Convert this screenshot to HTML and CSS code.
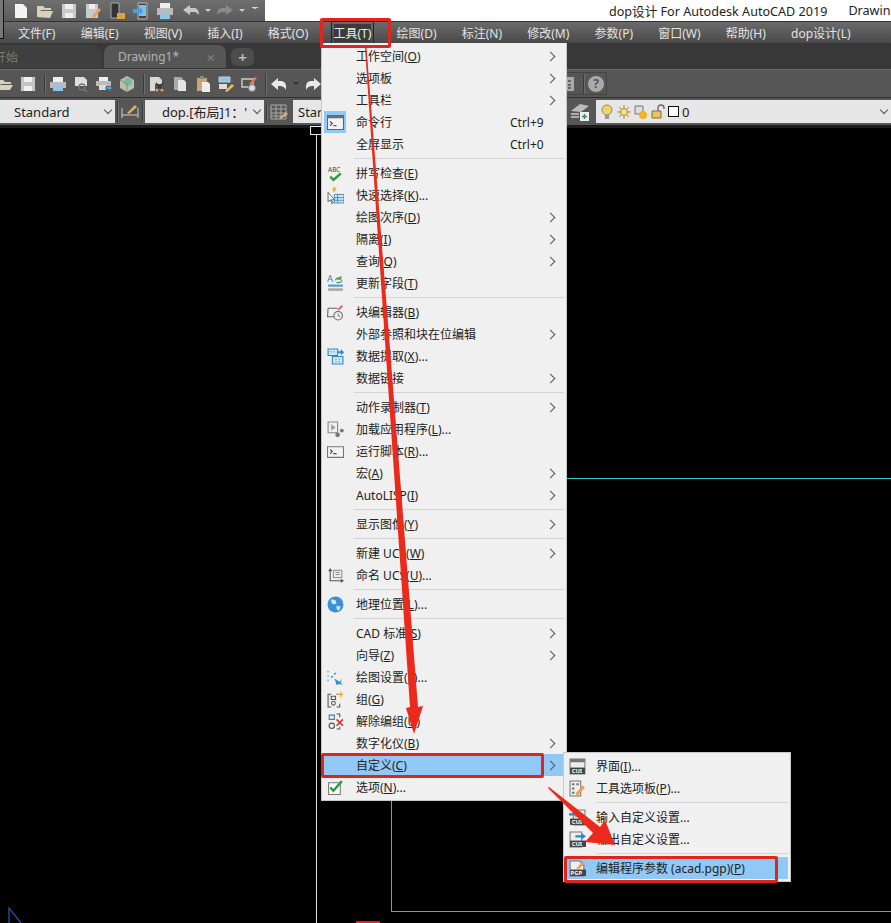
FILE: index.html
```html
<!DOCTYPE html>
<html lang="zh-CN">
<head>
    <meta charset="UTF-8" />
    <title>dop设计 For Autodesk AutoCAD 2019</title>
    <link rel="stylesheet" href="styles.css">
</head>
<body>
    <i class="corner"></i>

    <!-- Title bar -->
    <div class="titlebar">
        <div class="qat">
            <svg class="qi" viewBox="0 0 18 18"><path d="M3 2h8l4 4v10H3z" fill="#f4f4f4"/></svg>
            <svg class="qi" viewBox="0 0 18 18"><path d="M1 15V4h6l2 2h6v2H5l-4 7 3-6h13l-3 7z" fill="#d8d2bd"/></svg>
            <svg class="qi" viewBox="0 0 18 18"><path d="M2 2h14v14H2z" fill="#c9c9c9"/><path d="M5 2h8v5H5zM5 11h8v5H5z" fill="#efefef"/></svg>
            <svg class="qi" viewBox="0 0 18 18"><path d="M2 2h12v14H2z" fill="#c9c9c9"/><path d="M5 2h6v5H5z" fill="#efefef"/><path d="M8 14l7-8 2 2-7 8z" fill="#e8a15a"/></svg>
            <svg class="qi" viewBox="0 0 18 18"><path d="M3 1h8v15H3z" fill="#333" stroke="#aaa"/><path d="M9 11h8v6H9z" fill="#d9a441"/></svg>
            <svg class="qi" viewBox="0 0 18 18"><path d="M6 1h9v16H6z" fill="#444" stroke="#bbb"/><path d="M7 3h7v11H7z" fill="#7cc0ee"/><path d="M1 7h7V5l3 4-3 4v-2H1z" fill="#4a9fdc"/></svg>
            <svg class="qi" viewBox="0 0 18 18"><path d="M4 1h10v5H4z" fill="#eee"/><path d="M1 6h16v7H1z" fill="#bbb"/><path d="M4 11h10v6H4z" fill="#8fc4ea"/></svg>
            <svg class="qi undo" viewBox="0 0 18 18"><path d="M1 8l7-5v3h5q4 1 4 7-2-3-5-3H8v3z" fill="#c8c8c8"/></svg>
            <span class="drop"></span>
            <svg class="qi redo" viewBox="0 0 18 18"><path d="M17 8l-7-5v3H5q-4 1-4 7 2-3 5-3h4v3z" fill="#8a8a8a"/></svg>
            <span class="drop"></span>
            <span class="qat-more"></span>
        </div>
        <div class="app-title">dop设计 For Autodesk AutoCAD 2019</div>
        <div class="doc-title">Drawing</div>
    </div>

    <!-- Menu bar -->
    <div class="menubar">
        <span>文件(F)</span>
        <span>编辑(E)</span>
        <span>视图(V)</span>
        <span>插入(I)</span>
        <span>格式(O)</span>
        <span class="open">工具(T)</span>
        <span>绘图(D)</span>
        <span>标注(N)</span>
        <span>修改(M)</span>
        <span>参数(P)</span>
        <span>窗口(W)</span>
        <span>帮助(H)</span>
        <span>dop设计(L)</span>
    </div>

    <!-- File tabs -->
    <div class="tabbar">
        <div class="tab start">开始</div>
        <div class="tab active">Drawing1*<span class="close">×</span></div>
        <div class="tab plus">+</div>
    </div>

    <!-- Standard toolbar -->
    <div class="toolbar">
        <svg class="ti first" viewBox="0 0 16 16"><path d="M0 14V4h6l2 2h6v2H4l-4 6 3-5h13l-3 5z" fill="#d8d2bd"/></svg>
        <svg class="ti" viewBox="0 0 16 16"><path d="M1 1h14v14H1z" fill="#c4c4c4"/><path d="M4 1h8v5H4zM4 10h8v5H4z" fill="#f0f0f0"/></svg>
        <i class="sep"></i>
        <svg class="ti" viewBox="0 0 16 16"><path d="M3 1h10v5H3z" fill="#eee"/><path d="M0 6h16v6H0z" fill="#bbb"/><path d="M3 10h10v5H3z" fill="#8fc4ea"/></svg>
        <svg class="ti" viewBox="0 0 16 16"><path d="M2 1h9l3 3v6H2z" fill="#ddd"/><circle cx="9" cy="11" r="3" fill="none" stroke="#777" stroke-width="1.3"/><path d="M11 13l3 3" stroke="#777" stroke-width="1.5"/></svg>
        <svg class="ti" viewBox="0 0 16 16"><path d="M3 1h9v4H3z" fill="#eee"/><path d="M0 5h15v5H0z" fill="#bbb"/><path d="M3 9h7v5H3z" fill="#ddd"/><path d="M9 11h4V9l3 3-3 3v-2H9z" fill="#4a9fdc"/></svg>
        <svg class="ti" viewBox="0 0 16 16"><path d="M8 0l7 4v8l-7 4-7-4V4z" fill="#b9c2a8"/><circle cx="9" cy="6" r="4" fill="#7fb8a0"/><path d="M1 4l7 4v8" fill="none" stroke="#888"/></svg>
        <i class="sep"></i>
        <svg class="ti" viewBox="0 0 16 16"><path d="M1 1h9l3 3v4H1z" fill="#d8d8d8"/><path d="M1 8h5v7H1z" fill="#d8d8d8"/><path d="M7 7l7 7M14 7l-7 7" stroke="#333" stroke-width="1.3"/><circle cx="8" cy="14" r="1.6" fill="#e0a050"/><circle cx="13" cy="14" r="1.6" fill="#e0a050"/></svg>
        <svg class="ti" viewBox="0 0 16 16"><path d="M2 1h7l2 2v11H2z" fill="#aaa"/><path d="M6 4h6l2 2v9H6z" fill="#e6e6e6"/></svg>
        <svg class="ti" viewBox="0 0 16 16"><path d="M2 2h10v13H2z" fill="#c9a679"/><path d="M5 0h4v3H5z" fill="#888"/><path d="M7 6h6l2 2v8H7z" fill="#eee"/></svg>
        <svg class="ti" viewBox="0 0 16 16"><path d="M1 1h11v5H1z" fill="#8fc4ea" stroke="#ccc"/><path d="M1 8h8v5H1z" fill="#ddd"/><path d="M7 15l7-7 2 2-7 6z" fill="#e8c06a"/></svg>
        <svg class="ti" viewBox="0 0 16 16"><path d="M1 3h11v8H1z" fill="none" stroke="#ccc" stroke-width="1.4"/><circle cx="11" cy="12" r="3.5" fill="#ddd" stroke="#777"/><path d="M8 8l6-7 2 1-6 7z" fill="#e07a50"/></svg>
        <i class="sep"></i>
        <svg class="ti" viewBox="0 0 16 16"><path d="M0 8l7-6v3h4q5 1 4 9-2-4-6-4H7v4z" fill="#e8e8e8"/></svg>
        <span class="drop dark"></span>
        <svg class="ti" viewBox="0 0 16 16"><path d="M16 8L9 2v3H5Q0 6 1 14q2-4 6-4h2v4z" fill="#e8e8e8"/></svg>
        <div class="toolbar-right">
            <svg class="ti" viewBox="0 0 16 16"><path d="M0 1h14v14H0z" fill="#aaa"/><path d="M3 4h3v2H3zM8 4h3v2H8zM3 8h3v2H3zM8 8h3v2H8zM3 11h3v2H3zM8 11h3v2H8z" fill="#666"/></svg>
            <i class="sep"></i>
            <span class="help">?</span>
        </div>
    </div>

    <!-- Style toolbar -->
    <div class="stylebar">
        <div class="combo c-standard">Standard<span class="caret"></span></div>
        <i class="sep"></i>
        <svg class="si" viewBox="0 0 20 20"><path d="M2 6v10M18 6v10M2 13h16" stroke="#ccc" fill="none"/><path d="M7 11l8-8 2 2-8 7z" fill="#d8b26a"/></svg>
        <i class="sep"></i>
        <div class="combo c-dim">dop.[布局]1：'<span class="caret"></span></div>
        <i class="sep"></i>
        <svg class="si" viewBox="0 0 20 20"><path d="M2 3h15v14H2zM2 7h15M2 11h15M2 14h15M7 3v14M12 3v14" fill="none" stroke="#aaa"/><path d="M10 16l7-6 2 2-7 5z" fill="#d8b26a"/></svg>
        <div class="combo c-table">Star</div>
        <div class="layer-group">
            <svg class="si" viewBox="0 0 20 20"><path d="M1 9l9-7 9 2-8 6z" fill="#bbb"/><path d="M1 12h8M1 15h8" stroke="#ccc" stroke-width="1.5"/><path d="M10 10h9v9h-9z" fill="#eee"/><path d="M14.500 12v5M12 14.500h5" stroke="#3a8a55" stroke-width="1.500"/></svg>
            <div class="combo c-layer">
                <svg class="li" viewBox="0 0 14 16"><circle cx="7" cy="6" r="5" fill="#f4d65c" stroke="#888"/><path d="M5 11h4v4H5z" fill="#999"/></svg>
                <svg class="li" viewBox="0 0 14 16"><circle cx="7" cy="8" r="3.500" fill="#f4e38a" stroke="#a58a3a"/><path d="M7 1v3M7 12v3M0 8h3M11 8h3M2 3l2 2M10 11l2 2M12 3l-2 2M2 13l2-2" stroke="#a58a3a"/></svg>
                <svg class="li" viewBox="0 0 14 16"><path d="M1 2h8v8H1z" fill="#ddd" stroke="#777"/><circle cx="9" cy="11" r="4" fill="#f0b52a"/></svg>
                <svg class="li" viewBox="0 0 14 16"><path d="M1 7h9v7H1z" fill="#e8c65a" stroke="#8a7030"/><path d="M7 7V4q0-3 3-3t3 3v1" fill="none" stroke="#666" stroke-width="1.300"/></svg>
                <span class="swatch"></span>
                <span class="layer-name">0</span>
                <span class="caret"></span>
            </div>
        </div>
    </div>

    <!-- Drawing area -->
    <div class="canvas">
        <i class="grip"></i>
        <i class="line white-v"></i>
        <i class="line cy-top"></i>
        <i class="line cy-left"></i>
        <i class="line cy-bottom"></i>
        <i class="red-mark"></i>
        <svg class="ucs" viewBox="0 0 14 16"><path d="M1 16V1l12 15" fill="none" stroke="#2a4fb0" stroke-width="1.300"/></svg>
    </div>

    <!-- Tools menu -->
    <div class="menu tools-menu">
        <div class="row sub"><span class="ico"></span><span class="label">工作空间(<u>O</u>)</span></div>
        <div class="row sub"><span class="ico"></span><span class="label">选项板</span></div>
        <div class="row sub"><span class="ico"></span><span class="label">工具栏</span></div>
        <div class="row"><span class="ico on"><svg viewBox="0 0 16 14"><path d="M.5.5h15v13H.5z" fill="#f4f4f4" stroke="#666"/><path d="M1 1h14v2H1z" fill="#666"/><path d="M3 6l2 2-2 2M6 10h3" fill="none" stroke="#333"/></svg></span><span class="label">命令行</span><span class="key">Ctrl+9</span></div>
        <div class="row"><span class="ico"></span><span class="label">全屏显示</span><span class="key">Ctrl+0</span></div>
        <hr>
        <div class="row"><span class="ico"><svg viewBox="0 0 16 16"><text x="1" y="7" class="ico-text">ABC</text><path d="M3 11l3 3 7-6" fill="none" stroke="#2f9a3c" stroke-width="2.200"/></svg></span><span class="label">拼写检查(<u>E</u>)</span></div>
        <div class="row"><span class="ico"><svg viewBox="0 0 16 16"><path d="M1 5v9l2-2 2 4 1-1-2-3h3z" fill="#fff" stroke="#555" stroke-width=".8"/><path d="M7 7h9v8H7zM7 10h9M7 12.500h9M10 7v8" fill="#d8ecf8" stroke="#3b7fb5" stroke-width=".8"/><path d="M6 0l3 1-2 4-2-2z" fill="#f0b52a"/></svg></span><span class="label">快速选择(<u>K</u>)...</span></div>
        <div class="row sub"><span class="ico"></span><span class="label">绘图次序(<u>D</u>)</span></div>
        <div class="row sub"><span class="ico"></span><span class="label">隔离(<u>I</u>)</span></div>
        <div class="row sub"><span class="ico"></span><span class="label">查询(<u>Q</u>)</span></div>
        <div class="row"><span class="ico"><svg viewBox="0 0 16 16"><text x="0" y="7" class="ico-text blue">A</text><path d="M8 5q1-3 5-2M13 1v3h-3M14 5q-1 3-5 2" fill="none" stroke="#3a9a4a" stroke-width="1.100"/><path d="M1 9h14v2H1z" fill="#4a9fdc"/><path d="M1 12.500h14v2.500H1z" fill="#aaa"/></svg></span><span class="label">更新字段(<u>T</u>)</span></div>
        <hr>
        <div class="row"><span class="ico"><svg viewBox="0 0 16 16"><path d="M1 4h9M1 4l-.500 8h7" fill="none" stroke="#666"/><circle cx="10.500" cy="11" r="4" fill="#eee" stroke="#666"/><path d="M10.500 9v2l2 1" fill="none" stroke="#666" stroke-width=".8"/><path d="M10 5l4-4 1 1-4 4z" fill="#d9534f"/></svg></span><span class="label">块编辑器(<u>B</u>)</span></div>
        <div class="row sub"><span class="ico"></span><span class="label">外部参照和块在位编辑</span></div>
        <div class="row"><span class="ico"><svg viewBox="0 0 16 16"><path d="M1 1h9v6H1z" fill="#cde6f8" stroke="#2d87c8"/><path d="M5 8h10v7H5z" fill="#cde6f8" stroke="#2d87c8"/><path d="M3 3h1v1H3zM6 3h1v1H6zM8 10h1v1H8zM11 10h1v1h-1zM8 12.500h1v1H8zM11 12.500h1v1h-1z" fill="#2d87c8"/><path d="M10 3h3V1l3 3-3 3V5h-3z" fill="#2d87c8"/></svg></span><span class="label">数据提取(<u>X</u>)...</span></div>
        <div class="row sub"><span class="ico"></span><span class="label">数据链接</span></div>
        <hr>
        <div class="row sub"><span class="ico"></span><span class="label">动作录制器(<u>T</u>)</span></div>
        <div class="row"><span class="ico"><svg viewBox="0 0 16 16"><path d="M1 1h9v10H1z" fill="#eee" stroke="#888"/><path d="M4 3l4 3-4 3z" fill="#999"/><circle cx="10" cy="13" r="2.200" fill="#777"/><circle cx="14" cy="9" r="1.800" fill="#777"/></svg></span><span class="label">加载应用程序(<u>L</u>)...</span></div>
        <div class="row"><span class="ico"><svg viewBox="0 0 16 14"><path d="M.5 2.500h15v10H.5z" fill="#f4f4f4" stroke="#777"/><path d="M3 5l2 2-2 2M6 9h3" fill="none" stroke="#444"/></svg></span><span class="label">运行脚本(<u>R</u>)...</span></div>
        <div class="row sub"><span class="ico"></span><span class="label">宏(<u>A</u>)</span></div>
        <div class="row sub"><span class="ico"></span><span class="label">AutoLISP(<u>I</u>)</span></div>
        <hr>
        <div class="row sub"><span class="ico"></span><span class="label">显示图像(<u>Y</u>)</span></div>
        <hr>
        <div class="row sub"><span class="ico"></span><span class="label">新建 UCS(<u>W</u>)</span></div>
        <div class="row"><span class="ico"><svg viewBox="0 0 16 16"><path d="M3 3v10h11" fill="none" stroke="#555"/><path d="M1 4l2-3 2 3zM13 11l3 2-3 2z" fill="#555"/><path d="M6 3h8v7H6zM8 5h4M8 7h4" fill="#eee" stroke="#777" stroke-width=".8"/></svg></span><span class="label">命名 UCS(<u>U</u>)...</span></div>
        <hr>
        <div class="row"><span class="ico"><svg viewBox="0 0 16 16"><circle cx="8" cy="8" r="7.500" fill="#3f8fd6"/><path d="M4 3l4 1 1 3-3 1-2-2zM9 9l4 1-2 4-2-2z" fill="#cfe8f8"/></svg></span><span class="label">地理位置(<u>L</u>)...</span></div>
        <hr>
        <div class="row sub"><span class="ico"></span><span class="label">CAD 标准(<u>S</u>)</span></div>
        <div class="row sub"><span class="ico"></span><span class="label">向导(<u>Z</u>)</span></div>
        <div class="row"><span class="ico"><svg viewBox="0 0 16 16"><path d="M1 2v1M1 6v1M1 10v1M4 8l5-5" stroke="#2d87c8" stroke-width="1.300" fill="none" stroke-dasharray="2 2"/><path d="M7 9l5 3 2-3-1 4 2 2-3-1-3 1z" fill="#3a8ed0"/></svg></span><span class="label">绘图设置(<u>F</u>)...</span></div>
        <div class="row"><span class="ico"><svg viewBox="0 0 16 16"><path d="M4 3H1v12h3M9 3h2M9 15h3v-3" fill="none" stroke="#555"/><path d="M4 5h4v3H4z" fill="none" stroke="#555"/><circle cx="6" cy="11.500" r="1.800" fill="none" stroke="#555"/><path d="M13 0l1 2 2 1-2 1-1 3-1-3-2-1 2-1z" fill="#f0b52a"/></svg></span><span class="label">组(<u>G</u>)</span></div>
        <div class="row"><span class="ico"><svg viewBox="0 0 16 16"><path d="M2 2h5v4H2z" fill="none" stroke="#3b7fb5"/><circle cx="4.500" cy="12" r="2.500" fill="none" stroke="#555"/><path d="M9 1h3v3M12 13v2H9" fill="none" stroke="#555"/><path d="M9 6l6 6M15 6l-6 6" stroke="#d9342b" stroke-width="1.600"/></svg></span><span class="label">解除编组(<u>U</u>)</span></div>
        <div class="row sub"><span class="ico"></span><span class="label">数字化仪(<u>B</u>)</span></div>
        <div class="row sub hot"><span class="ico"></span><span class="label">自定义(<u>C</u>)</span></div>
        <div class="row"><span class="ico"><svg viewBox="0 0 16 16"><path d="M1.500 3.500h11v11h-11z" fill="#fff" stroke="#777"/><path d="M3 8l3 3 8-9" fill="none" stroke="#2f9a3c" stroke-width="2.200"/></svg></span><span class="label">选项(<u>N</u>)...</span></div>
    </div>

    <!-- Customize submenu -->
    <div class="menu custom-menu">
        <div class="row"><span class="ico"><svg viewBox="0 0 16 16"><path d="M1 1h14v14H1z" fill="#eee" stroke="#777"/><path d="M1 1h14v3H1z" fill="#777"/><path d="M1 9h14v6H1z" fill="#444"/><text x="2.500" y="14.500" class="ico-label">CUI</text></svg></span><span class="label">界面(<u>I</u>)...</span></div>
        <div class="row"><span class="ico"><svg viewBox="0 0 16 16"><path d="M1 1h10v14H1z" fill="#eee" stroke="#777"/><path d="M3 3h2v2H3zM7 3h2v2H7zM3 7h2v2H3zM3 11h2v2H3z" fill="#666"/><path d="M6 13l7-8 2 2-7 8z" fill="#e8a15a"/></svg></span><span class="label">工具选项板(<u>P</u>)...</span></div>
        <hr>
        <div class="row"><span class="ico"><svg viewBox="0 0 16 16"><path d="M4 1h11v14H4z" fill="#eee" stroke="#777"/><path d="M1 9h15v6H1z" fill="#444"/><text x="2.500" y="14.500" class="ico-label">CUI</text><path d="M0 4h6V2l4 3-4 3V6H0z" fill="#2d87c8"/></svg></span><span class="label">输入自定义设置...</span></div>
        <div class="row"><span class="ico"><svg viewBox="0 0 16 16"><path d="M1 1h11v14H1z" fill="#eee" stroke="#777"/><path d="M1 9h15v6H1z" fill="#444"/><text x="2.500" y="14.500" class="ico-label">CUI</text><path d="M6 4h6V2l4 3-4 3V6H6z" fill="#2d87c8"/></svg></span><span class="label">输出自定义设置...</span></div>
        <hr>
        <div class="row hot"><span class="ico"><svg viewBox="0 0 16 16"><path d="M1 1h9l4 4v10H1z" fill="#eee" stroke="#777"/><path d="M1 9h15v6H1z" fill="#444"/><text x="1.500" y="14.500" class="ico-label">PGP</text><path d="M7 8l6-7 2 2-6 6z" fill="#e8a15a"/></svg></span><span class="label">编辑程序参数 (acad.pgp)(<u>P</u>)</span></div>
    </div>

    <!-- Red annotations drawn over the screenshot -->
    <i class="red-box box-tools"></i>
    <i class="red-box box-custom"></i>
    <i class="red-box box-pgp"></i>
    <svg class="arrows" viewBox="0 0 891 923">
        <path d="M365 48h1.500L418 707l5-1-9 28-8-26 4-1z" fill="#ea2a1c"/>
        <path d="M548 788l1-1 51 40 5-7 10 25-30-3 8-9z" fill="#ea2a1c"/>
    </svg>
</body>
</html>
```

FILE: styles.css
```css
* {
    box-sizing: border-box;
}

html, body {
    height: 100%;
}

body {
    margin: 0;
    display: flex;
    flex-direction: column;
    position: relative;
    overflow: hidden;
    background: #000;
    font-family: "Noto Sans", "Noto Sans CJK SC", sans-serif;
    font-size: 12px;
    color: #222;
}

.corner {
    position: absolute;
    left: 0;
    top: 0;
    width: 4px;
    height: 39px;
    background: #777;
    border-right: 1px solid #111;
    border-bottom: 1px solid #111;
}

/* title bar */
.titlebar {
    height: 22px;
    flex: none;
    display: flex;
    align-items: center;
    background: #fff;
    border-bottom: 1px solid #333;
}

.qat {
    width: 265px;
    height: 21px;
    flex: none;
    display: flex;
    align-items: center;
    gap: 6px;
    padding-left: 12px;
    background: linear-gradient(#6f6f6f, #5c5c5c);
}

.qi {
    width: 18px;
    height: 18px;
    flex: none;
}

.qi.undo {
    margin-left: 2px;
}

.drop {
    width: 0;
    height: 0;
    margin: 0 -1px;
    border: 3px solid transparent;
    border-top: 3px solid #ccc;
    border-bottom: 0;
}

.drop.dark {
    border-top-color: #333;
}

.qat-more {
    width: 8px;
    height: 7px;
    margin-left: 1px;
    border-top: 2px solid #ddd;
    border-left: 4px solid transparent;
    border-right: 4px solid transparent;
    position: relative;
}

.app-title {
    margin-left: 344px;
    font-size: 12.6px;
    white-space: nowrap;
}

.doc-title {
    margin-left: 21px;
    font-size: 12.6px;
    white-space: nowrap;
}

/* menu bar */
.menubar {
    height: 21px;
    flex: none;
    display: flex;
    align-items: center;
    gap: 25.2px;
    padding-left: 18px;
    background: linear-gradient(#6a6a6a, #4a4a4a);
    color: #e2e2e2;
    white-space: nowrap;
}

.menubar .open {
    background: #3b3b3b;
    outline: 1px solid #222;
    outline-offset: 2px;
    color: #eee;
}

/* tabs */
.tabbar {
    height: 26px;
    flex: none;
    display: flex;
    align-items: flex-end;
    padding-bottom: 1px;
    background: #383838;
    color: #aaa;
    font-size: 12px;
}

.tab {
    height: 23px;
    display: flex;
    align-items: center;
}

.tab.start {
    width: 108px;
    margin-left: -6px;
    background: #3f3f3f;
    color: #7a7a7a;
    border-radius: 0 10px 0 0;
}

.tab.active {
    width: 122px;
    margin-left: 2px;
    padding-left: 14px;
    position: relative;
    background: #565656;
    color: #b4b4b4;
    border-radius: 8px 8px 0 0;
}

.close {
    position: absolute;
    right: 11px;
    top: 2px;
    font-size: 15px;
    font-weight: bold;
    color: #777;
}

.tab.plus {
    width: 23px;
    height: 18px;
    margin: 0 0 2px 5px;
    justify-content: center;
    background: #4c4c4c;
    color: #bbb;
    font-size: 15px;
    font-weight: bold;
    border-radius: 6px;
}

/* toolbars */
.toolbar {
    height: 28px;
    flex: none;
    display: flex;
    align-items: center;
    gap: 7px;
    background: #565656;
    border-top: 1px solid #6a6a6a;
}

.toolbar .sep {
    margin: 0 -2px 0 1px;
}

.ti {
    width: 16px;
    height: 16px;
    flex: none;
}

.ti.first {
    margin-left: -3px;
}

.sep {
    width: 1px;
    height: 20px;
    flex: none;
    background: #3a3a3a;
    box-shadow: 1px 0 0 #6e6e6e;
}

.toolbar-right {
    height: 23px;
    margin-left: auto;
    margin-right: 284px;
    display: flex;
    align-items: center;
    gap: 6px;
    padding-right: 2px;
    border: 1px solid #444;
    border-left: 0;
}

.help {
    width: 16px;
    height: 16px;
    display: flex;
    align-items: center;
    justify-content: center;
    background: #aaa;
    border-radius: 50%;
    color: #555;
    font-size: 12px;
    font-weight: bold;
}

.stylebar {
    height: 31px;
    flex: none;
    display: flex;
    align-items: center;
    gap: 2px;
    background: #565656;
    border-top: 1px solid #2f2f2f;
    border-bottom: 3px solid #1c1c1c;
}

.combo {
    height: 23px;
    display: flex;
    align-items: center;
    position: relative;
    background: #e6e6e6;
    color: #222;
    font-size: 13px;
    white-space: nowrap;
}

.c-standard {
    width: 115px;
    padding-left: 14px;
}

.c-dim {
    width: 119px;
    padding-left: 17px;
}

.c-table {
    width: 40px;
    margin-left: 2px;
    padding-left: 5px;
}

.caret {
    position: absolute;
    right: 4px;
    top: 7px;
    width: 6px;
    height: 6px;
    border-right: 1px solid #555;
    border-bottom: 1px solid #555;
    transform: rotate(45deg);
}

.si {
    width: 20px;
    height: 20px;
    flex: none;
}

.layer-group {
    margin-left: auto;
    display: flex;
    align-items: center;
    gap: 6px;
}

.c-layer {
    width: 295px;
    gap: 3px;
    padding-left: 4px;
}

.li {
    width: 14px;
    height: 16px;
    flex: none;
}

.swatch {
    width: 11px;
    height: 11px;
    background: #fff;
    border: 1px solid #111;
}

/* drawing area */
.canvas {
    flex: 1;
    position: relative;
    background: #000;
}

.grip {
    position: absolute;
    left: 310px;
    top: -2px;
    width: 12px;
    height: 9px;
    background: #000;
    border: 1px solid #eee;
}

.line {
    position: absolute;
}

.white-v {
    left: 316px;
    top: 7px;
    bottom: 0;
    width: 1px;
    background: #ddd;
}

.cy-top {
    left: 391px;
    right: 0;
    top: 350px;
    height: 1px;
    background: #27c4c4;
}

.cy-left {
    left: 391px;
    top: 350px;
    bottom: 11px;
    width: 1px;
    background: #27c4c4;
}

.cy-bottom {
    left: 391px;
    right: 0;
    bottom: 11px;
    height: 1px;
    background: #27c4c4;
}

.red-mark {
    position: absolute;
    left: 356px;
    bottom: 0;
    width: 24px;
    height: 2px;
    background: #e02020;
}

.ucs {
    position: absolute;
    left: 8px;
    bottom: -1px;
    width: 14px;
    height: 18px;
}

/* dropdown menus */
.menu {
    position: absolute;
    padding: 2px;
    background: #f0f0f0;
    border: 1px solid #c8c8c8;
}

.tools-menu {
    left: 321px;
    top: 43px;
    width: 246px;
    border-top: 0;
}

.custom-menu {
    left: 563px;
    top: 752px;
    width: 228px;
    padding-top: 2px;
}

.row {
    height: 22px;
    display: flex;
    align-items: center;
    position: relative;
    white-space: nowrap;
    color: #222;
}

.ico {
    width: 22px;
    height: 22px;
    margin-right: 10px;
    flex: none;
    display: flex;
    align-items: center;
    justify-content: center;
}

.custom-menu .ico {
    margin-right: 8px;
}

.ico svg {
    width: 17px;
    height: 17px;
}

.ico.on {
    background: #90c8f6;
}

.key {
    position: absolute;
    left: 186px;
}

.sub::after {
    content: "";
    position: absolute;
    right: 10px;
    top: 8px;
    width: 6px;
    height: 6px;
    border-top: 1px solid #555;
    border-right: 1px solid #555;
    transform: rotate(45deg);
}

.hot {
    background: #90c8f6;
}

.menu hr {
    height: 1px;
    margin: 3px 0 3px 30px;
    border: 0;
    background: #d4d4d4;
}

.ico-text {
    font-size: 6px;
    fill: #444;
}

.ico-text.blue {
    font-size: 9px;
    fill: #2d87c8;
}

.ico-label {
    font-size: 5.5px;
    font-weight: bold;
    fill: #fff;
}

/* annotations */
.red-box {
    position: absolute;
    border: 3px solid #e0261c;
    border-radius: 2px;
}

.box-tools {
    left: 320px;
    top: 18px;
    width: 71px;
    height: 30px;
}

.box-custom {
    left: 321px;
    top: 753px;
    width: 223px;
    height: 25px;
}

.box-pgp {
    left: 564px;
    top: 856px;
    width: 214px;
    height: 27px;
}

.arrows {
    position: absolute;
    left: 0;
    top: 0;
    width: 891px;
    height: 923px;
    pointer-events: none;
}
```
